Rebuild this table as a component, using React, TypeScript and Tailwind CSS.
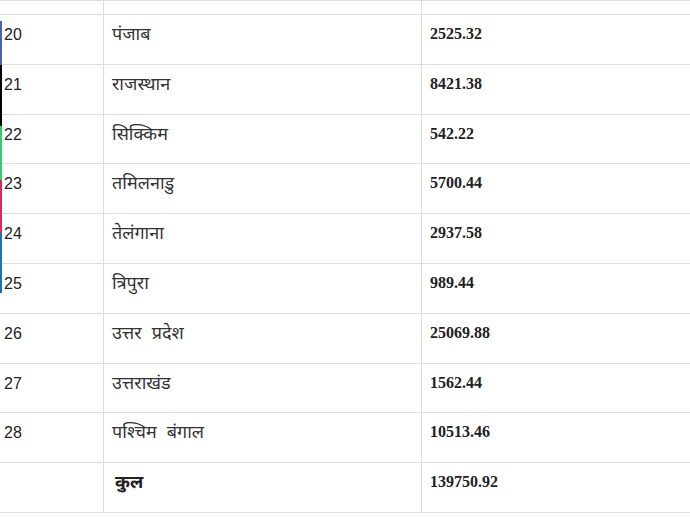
import React from "react";

const rows: [string, string, string][] = [
  ["20", "पंजाब", "2525.32"],
  ["21", "राजस्थान", "8421.38"],
  ["22", "सिक्किम", "542.22"],
  ["23", "तमिलनाडु", "5700.44"],
  ["24", "तेलंगाना", "2937.58"],
  ["25", "त्रिपुरा", "989.44"],
  ["26", "उत्तर  प्रदेश", "25069.88"],
  ["27", "उत्तराखंड", "1562.44"],
  ["28", "पश्चिम  बंगाल", "10513.46"],
];

const sans = { fontFamily: '"Liberation Sans", Arial, "Noto Sans", sans-serif' };
const serif = { fontFamily: '"Liberation Serif", "Times New Roman", serif' };

export default function App() {
  return (
    <div className="relative w-[690px] h-[518px] overflow-hidden bg-white text-[#222]">
      <div className="flex flex-col border-t border-[#dddddd]">
        <div className="grid grid-cols-[104px_318px_1fr] h-[14px] border-b border-[#dddddd]">
          <div className="border-r border-[#dddddd]" />
          <div className="border-r border-[#dddddd]" />
          <div />
        </div>
        {rows.map(([n, name, val]) => (
          <div
            key={n}
            className="grid grid-cols-[104px_318px_1fr] h-[49.8px] border-b border-[#dddddd]"
          >
            <div
              className="border-r border-[#dddddd] pl-[4px] pt-[8px] text-[16px] leading-[24px] text-[#222]"
              style={sans}
            >
              {n}
            </div>
            <div
              className="border-r border-[#dddddd] pl-[8px] pt-[7px] text-[18px] leading-[24px] text-[#333] whitespace-pre"
              style={sans}
            >
              {name}
            </div>
            <div
              className="pl-[8px] pt-[7px] text-[16px] leading-[24px] font-bold text-[#222]"
              style={serif}
            >
              {val}
            </div>
          </div>
        ))}
        <div className="grid grid-cols-[104px_318px_1fr] h-[49.8px] border-b border-[#dddddd]">
          <div className="border-r border-[#dddddd]" />
          <div
            className="border-r border-[#dddddd] pl-[11px] pt-[7px] text-[18px] leading-[24px] font-bold text-[#222]"
            style={sans}
          >
            कुल
          </div>
          <div
            className="pl-[8px] pt-[7px] text-[16px] leading-[24px] font-bold text-[#222]"
            style={serif}
          >
            139750.92
          </div>
        </div>
      </div>

      {/* share sidebar edge */}
      <div className="absolute left-0 top-[21px] w-[2px] flex flex-col">
        <div className="h-[44px] bg-[#4267b2]" />
        <div className="h-[61px] bg-black" />
        <div className="h-[54px] bg-[#25d366]" />
        <div className="h-[53px] bg-[#e4245a]" />
        <div className="h-[60px] bg-[#0a78c2]" />
      </div>
    </div>
  );
}
